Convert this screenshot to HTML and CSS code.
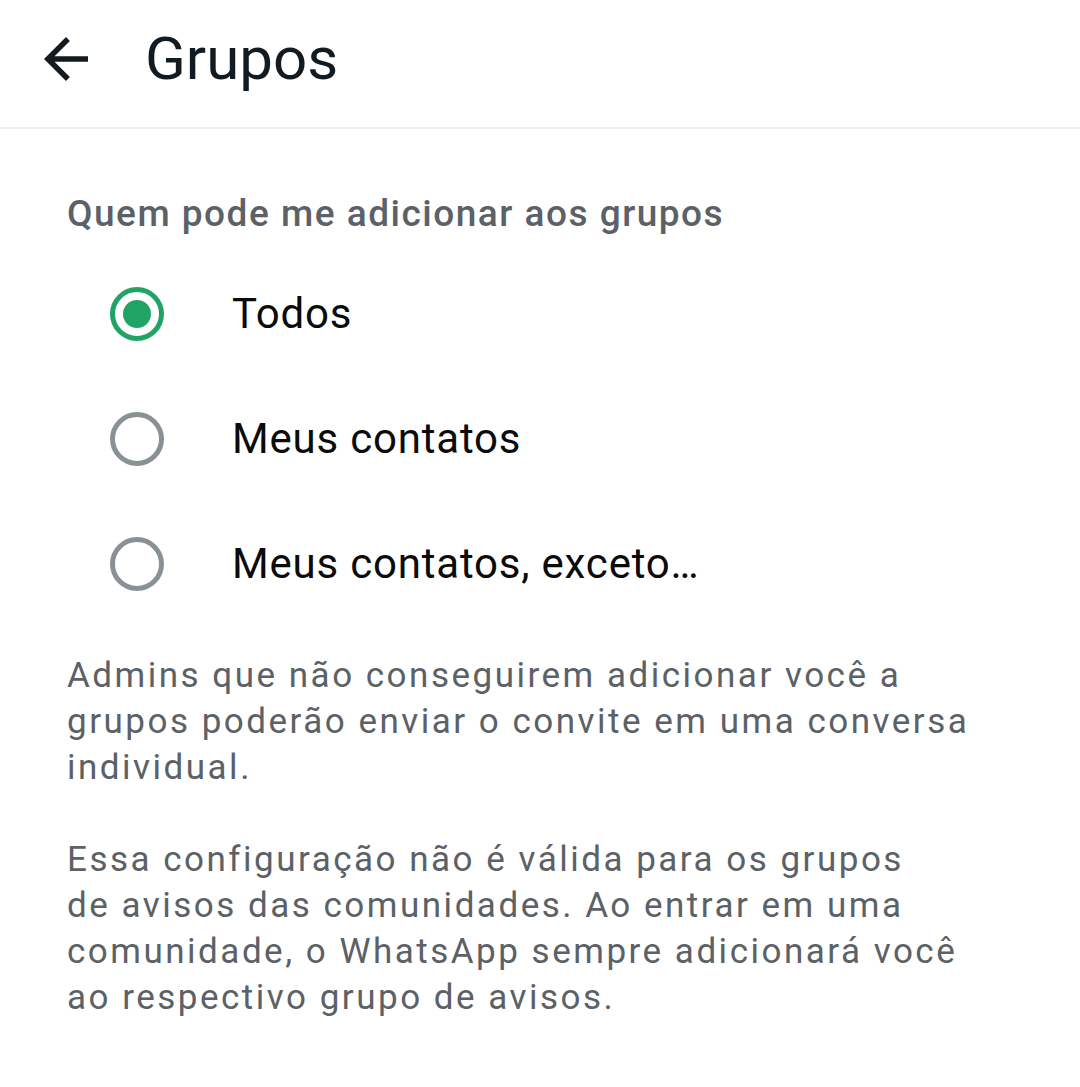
FILE: index.html
```html
<!DOCTYPE html>
<html>
<head>
    <meta charset="UTF-8">
    <link rel="stylesheet" href="styles.css">
</head>
<body>
    <div class="header">
        <svg class="back" viewBox="0 0 24 24" width="66" height="66">
            <path d="M20 11H7.83l5.59-5.59L12 4l-8 8 8 8 1.41-1.41L7.83 13H20v-2z" fill="#111b21"/>
        </svg>
        <h1>Grupos</h1>
    </div>

    <div class="content">
        <h2>Quem pode me adicionar aos grupos</h2>

        <div class="options">
            <div class="option">
                <span class="radio checked"></span>
                <span class="label">Todos</span>
            </div>
            <div class="option">
                <span class="radio"></span>
                <span class="label">Meus contatos</span>
            </div>
            <div class="option">
                <span class="radio"></span>
                <span class="label">Meus contatos, exceto…</span>
            </div>
        </div>

        <p class="note">Admins que não conseguirem adicionar você a<br>grupos poderão enviar o convite em uma conversa<br>individual.</p>
        <p class="note">Essa configuração não é válida para os grupos<br>de avisos das comunidades. Ao entrar em uma<br>comunidade, o WhatsApp sempre adicionará você<br>ao respectivo grupo de avisos.</p>
    </div>
</body>
</html>
```

FILE: styles.css
```css
body {
    margin: 0;
    background: #ffffff;
    font-family: Roboto, "Noto Sans", sans-serif;
}

.header {
    height: 129px;
    border-bottom: 2px solid #efefef;
    display: flex;
    align-items: center;
    box-sizing: border-box;
    padding-bottom: 10px;
}

.back {
    margin-left: 33px;
}

h1 {
    margin: 0 0 0 46px;
    font-size: 60px;
    font-weight: 400;
    color: #111b21;
}

.content {
    padding: 0 67px;
}

h2 {
    margin: 0;
    padding-top: 62px;
    font-size: 37px;
    line-height: 46px;
    font-weight: 500;
    letter-spacing: 1.5px;
    color: #5b6166;
}

.options {
    margin-top: 14px;
}

.option {
    height: 125px;
    display: flex;
    align-items: center;
}

.radio {
    width: 54px;
    height: 54px;
    margin-left: 43px;
    border: 5px solid #8a9194;
    border-radius: 50%;
    box-sizing: border-box;
    position: relative;
}

.radio.checked {
    border-color: #21a366;
}

.radio.checked::after {
    content: '';
    position: absolute;
    left: 8px;
    top: 8px;
    width: 28px;
    height: 28px;
    border-radius: 50%;
    background: #21a366;
}

.label {
    margin-left: 68px;
    font-size: 42px;
    letter-spacing: 0.8px;
    color: #0b0b0b;
}

.note {
    margin: 27px 0 46px;
    font-size: 35px;
    line-height: 46px;
    letter-spacing: 2.5px;
    color: #5b6166;
}

.note + .note {
    margin-top: 0;
}
```
